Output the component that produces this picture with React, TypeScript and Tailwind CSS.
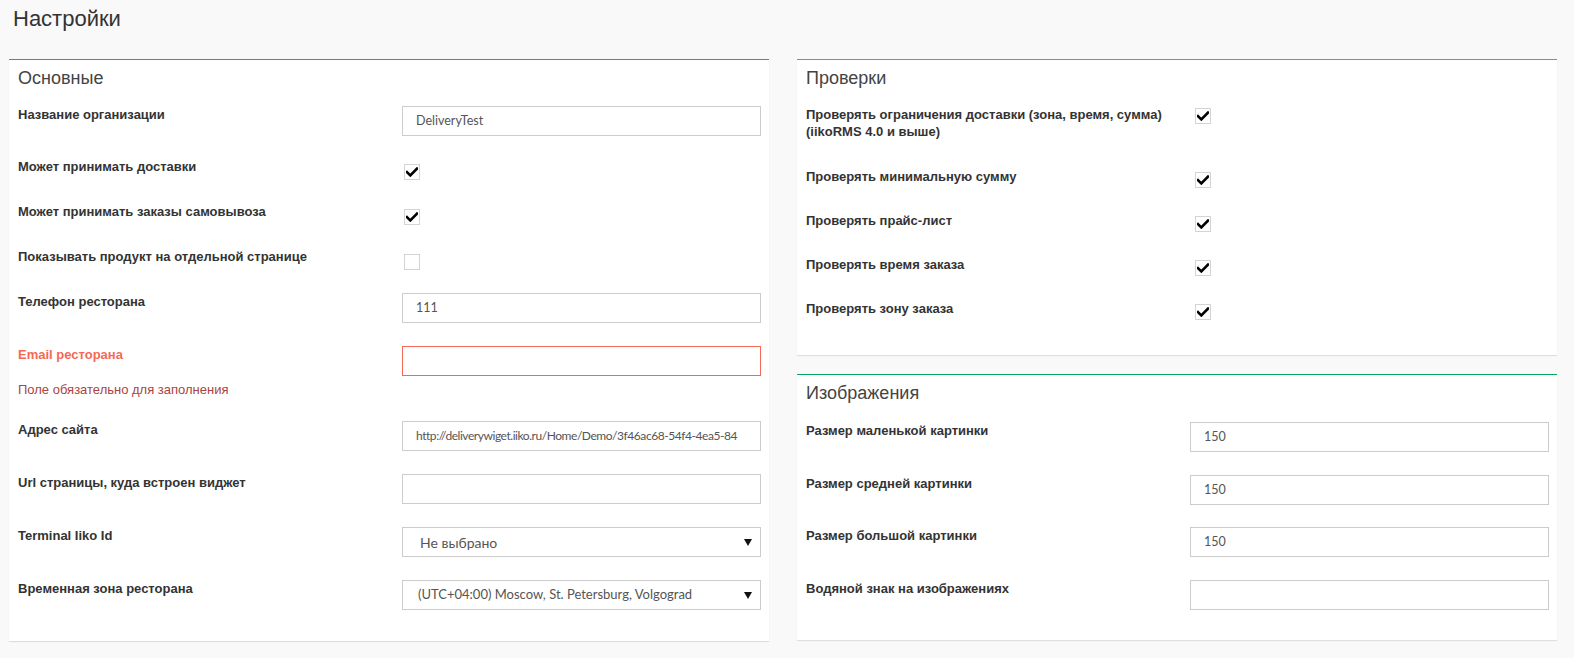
import React from "react";

const Check = ({ checked }: { checked: boolean }) => (
  <div className="w-[16px] h-[16px] border border-[#d4d4d4] bg-white flex items-center justify-center">
    {checked && (
      <svg width="12" height="10" viewBox="0 0 12 10">
        <path d="M1 5.2 L4.3 8.4 L11 1.6" fill="none" stroke="#000" strokeWidth="2.6" strokeLinecap="square" />
      </svg>
    )}
  </div>
);

const Input = ({ value, error, tight }: { value?: string; error?: boolean; tight?: boolean }) => (
  <div
    className={`h-[30px] w-full border ${error ? "border-[#f56954]" : "border-[#cccccc]"} bg-white flex items-center pl-[13px] overflow-hidden whitespace-nowrap ${tight ? "text-[12px] tracking-[-0.45px]" : "text-[12.5px]"} text-[#555] font-['Lato',sans-serif]`}
  >
    {value}
  </div>
);

const Select = ({ value, big }: { value: string; big?: boolean }) => (
  <div className="h-[30px] w-full border border-[#cccccc] bg-white flex items-center pl-[15px] pr-[8px] justify-between whitespace-nowrap text-[#555] font-['Lato',sans-serif]">
    <span className={big ? "text-[14px] pl-[2px]" : "text-[13px]"}>{value}</span>
    <svg width="8" height="7" viewBox="0 0 8 7">
      <path d="M0 0 L8 0 L4 7 Z" fill="#111" />
    </svg>
  </div>
);

const Label = ({ children, red }: { children: React.ReactNode; red?: boolean }) => (
  <div className={`text-[13px] leading-[16px] font-bold ${red ? "text-[#f56954]" : "text-[#333]"}`}>{children}</div>
);

const InputRow = ({ label, mt, children }: { label: string; mt: string; children: React.ReactNode }) => (
  <div className={`flex ${mt}`}>
    <div className="w-[384px] pt-[1px]">
      <Label>{label}</Label>
    </div>
    <div className="w-[359px]">{children}</div>
  </div>
);

const CheckRow = ({ label, mt, checked }: { label: React.ReactNode; mt: string; checked: boolean }) => (
  <div className={`flex ${mt}`}>
    <div className="w-[384px]">
      <Label>{label}</Label>
    </div>
    <div className="w-[359px] pt-[5px] pl-[2px]">
      <Check checked={checked} />
    </div>
  </div>
);

const Card = ({ color, title, children, extra }: { color: string; title: string; children: React.ReactNode; extra: string }) => (
  <div className={`w-[760px] bg-white border-t ${color} shadow-[0_1px_1px_rgba(0,0,0,0.1)] pl-[9px] pr-[8px] ${extra}`}>
    <div className="pt-[8px] text-[18px] leading-[20px] text-[#444]">{title}</div>
    {children}
  </div>
);

export default function App() {
  return (
    <div className="min-h-[658px] bg-[#f9f9f9] font-['Liberation_Sans',Arial,sans-serif]">
      <div className="pl-[13px] pt-[6px] text-[22px] leading-[26px] text-[#333]">Настройки</div>
      <div className="flex gap-[28px] pl-[9px] mt-[27px]">
        <Card color="border-[#3c8dbc]" title="Основные" extra="pb-[31px]">
          <InputRow label="Название организации" mt="mt-[18px]">
            <Input value="DeliveryTest" />
          </InputRow>
          <CheckRow label="Может принимать доставки" mt="mt-[23px]" checked />
          <CheckRow label="Может принимать заказы самовывоза" mt="mt-[24px]" checked />
          <CheckRow label="Показывать продукт на отдельной странице" mt="mt-[24px]" checked={false} />
          <InputRow label="Телефон ресторана" mt="mt-[23px]">
            <Input value="111" />
          </InputRow>
          <div className="flex mt-[23px]">
            <div className="w-[384px] pt-[1px]">
              <Label red>Email ресторана</Label>
              <div className="mt-[19px] text-[13px] leading-[16px] text-[#a94442]">Поле обязательно для заполнения</div>
            </div>
            <div className="w-[359px]">
              <Input error />
            </div>
          </div>
          <InputRow label="Адрес сайта" mt="mt-[23px]">
            <Input value="http://deliverywiget.iiko.ru/Home/Demo/3f46ac68-54f4-4ea5-84" tight />
          </InputRow>
          <InputRow label="Url страницы, куда встроен виджет" mt="mt-[23px]">
            <Input />
          </InputRow>
          <InputRow label="Terminal Iiko Id" mt="mt-[23px]">
            <Select value="Не выбрано" big />
          </InputRow>
          <InputRow label="Временная зона ресторана" mt="mt-[23px]">
            <Select value="(UTC+04:00) Moscow, St. Petersburg, Volgograd" />
          </InputRow>
        </Card>
        <div className="flex flex-col gap-[19px]">
          <Card color="border-[#00c0ef]" title="Проверки" extra="h-[296px]">
            <div className="flex mt-[18px]">
              <div className="w-[384px]">
                <div className="text-[13px] leading-[17px] font-bold text-[#333]">
                  Проверять ограничения доставки (зона, время, сумма)
                  <br />
                  (iikoRMS 4.0 и выше)
                </div>
              </div>
              <div className="w-[359px] pt-[2px] pl-[5px]">
                <Check checked />
              </div>
            </div>
            <div className="flex flex-col">
              {[
                ["Проверять минимальную сумму", "mt-[29px]"],
                ["Проверять прайс-лист", "mt-[25px]"],
                ["Проверять время заказа", "mt-[25px]"],
                ["Проверять зону заказа", "mt-[25px]"],
              ].map(([l, m]) => (
                <div key={l} className={`flex ${m}`}>
                  <div className="w-[384px]">
                    <Label>{l}</Label>
                  </div>
                  <div className="w-[359px] pt-[3px] pl-[5px]">
                    <Check checked />
                  </div>
                </div>
              ))}
            </div>
          </Card>
          <Card color="border-[#00a65a]" title="Изображения" extra="h-[266px]">
            <InputRow label="Размер маленькой картинки" mt="mt-[19px]">
              <Input value="150" />
            </InputRow>
            <InputRow label="Размер средней картинки" mt="mt-[23px]">
              <Input value="150" />
            </InputRow>
            <InputRow label="Размер большой картинки" mt="mt-[22px]">
              <Input value="150" />
            </InputRow>
            <InputRow label="Водяной знак на изображениях" mt="mt-[23px]">
              <Input />
            </InputRow>
          </Card>
        </div>
      </div>
    </div>
  );
}
